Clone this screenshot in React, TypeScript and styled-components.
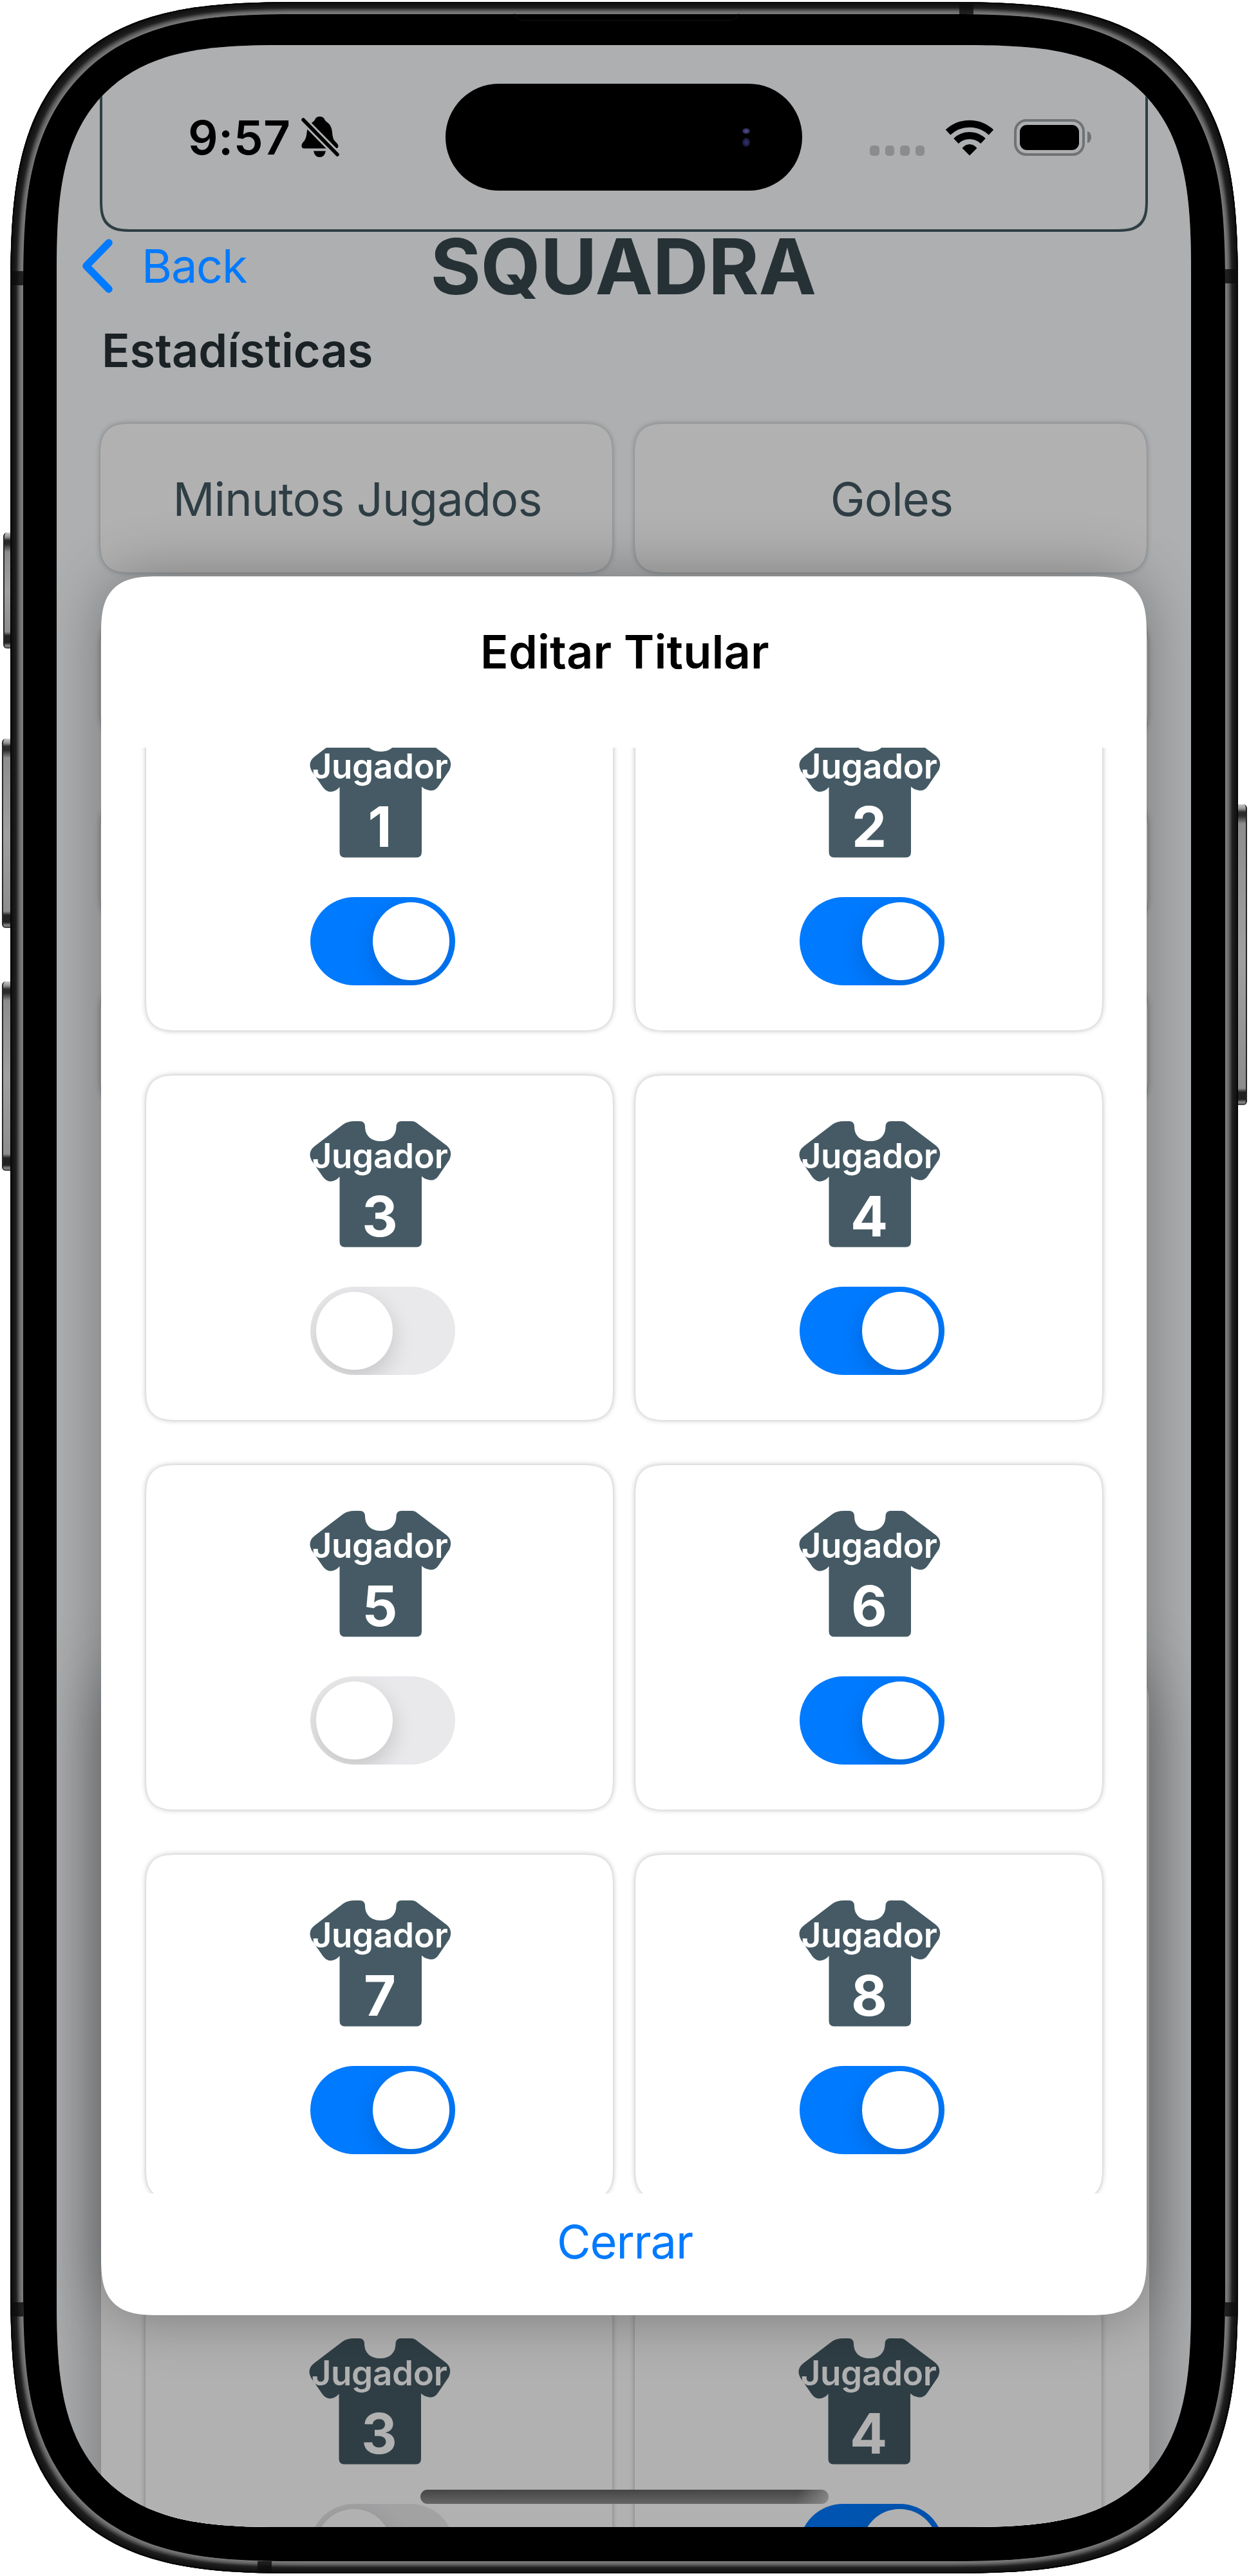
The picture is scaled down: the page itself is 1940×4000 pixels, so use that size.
import React from "react";
import styled, { createGlobalStyle, css } from "styled-components";

const GlobalStyle = createGlobalStyle`
  *, *::before, *::after { box-sizing: border-box; }
  html, body { margin: 0; padding: 0; background: #ffffff; }
  body { font-family: Inter, "Liberation Sans", sans-serif; font-kerning: normal; }
`;

const color = {
  blue: "#007aff",
  slate: "#455a64",
  slateDark: "#37474f",
  ink: "#263238",
  pageBg: "#f9fcff",
  dimmedBg: "#adafb1",
};

/* Continuous (squircle-like) corner, as iOS draws it. */
const continuous = (radius: number) => css`
  border-radius: ${radius}px;
  corner-shape: superellipse(1.56);
`;

/* ---------- Device ---------- */

const Stage = styled.main`
  position: relative;
  display: flex;
  width: 1940px;
  height: 4000px;
  padding: 3px 17px 4px 16px;
  overflow: hidden;
  background: #ffffff;
`;

const Frame = styled.div`
  position: relative;
  display: flex;
  width: 1907px;
  height: 3993px;
  padding: 19px 20px;
  ${continuous(455)}
  overflow: hidden;
  background: #7c7c7c;
  &::after {
    content: "";
    position: absolute;
    inset: 0;
    ${continuous(455)}
    box-shadow:
      inset 0 0 0 2px #050505,
      inset 0 0 0 6px #141414,
      inset 0 0 0 9px #1c1c1c,
      inset 0 0 0 10px #272727,
      inset 0 0 0 11px #333333,
      inset 0 0 0 12px #404040,
      inset 0 0 0 13px #4d4d4d,
      inset 0 0 0 14px #5a5a5a,
      inset 0 0 0 16px #686868,
      inset 0 0 0 18px #767676;
    pointer-events: none;
  }
`;

const Bezel = styled.div`
  position: relative;
  display: flex;
  flex: 1;
  padding: 48px 53px 53px 52px;
  ${continuous(432)}
  background: #000000;
`;

const SpeakerSlot = styled.div`
  position: absolute;
  top: -14px;
  left: 762px;
  width: 350px;
  height: 24px;
  border: 1px solid #121212;
  border-radius: 0 0 14px 14px;
`;

const AntennaBand = styled.span<{ $edge: "left" | "right" | "top" | "bottom"; $at: number }>`
  position: absolute;
  z-index: 1;
  background: rgba(12, 12, 12, 0.82);
  ${({ $edge, $at }) =>
    $edge === "left" || $edge === "right"
      ? css`
          ${$edge}: 0;
          top: ${$at}px;
          width: 20px;
          height: 22px;
        `
      : css`
          ${$edge}: 0;
          left: ${$at}px;
          width: 22px;
          height: 19px;
        `}
`;

const SideButton = styled.span<{ $side: "left" | "right"; $top: number; $height: number; $depth: number }>`
  position: absolute;
  top: ${({ $top }) => $top}px;
  width: ${({ $depth }) => $depth}px;
  height: ${({ $height }) => $height}px;
  ${({ $side, $depth }) =>
    $side === "left"
      ? css`
          left: ${16 - $depth}px;
          border-radius: 6px 0 0 6px;
          border-left: 2px solid #262626;
        `
      : css`
          left: 1923px;
          border-radius: 0 6px 6px 0;
          border-right: 2px solid #262626;
        `}
  background: linear-gradient(
    to bottom,
    #c9c9c9 0,
    #8f8f8f 7px,
    #2b2b2b 12px,
    #2b2b2b 18px,
    #8d8d8d 30px,
    #a0a0a0 50%,
    #8d8d8d calc(100% - 26px),
    #222222 calc(100% - 20px),
    #222222 calc(100% - 9px),
    #8a8a8a calc(100% - 4px),
    #333333 100%
  );
`;

const Screen = styled.div`
  position: relative;
  flex: 1;
  ${continuous(357)}
  overflow: hidden;
  background: ${color.pageBg};
`;

/* ---------- Page behind the dialog ---------- */

const Page = styled.div`
  display: flex;
  flex-direction: column;
  width: 1762px;
  padding: 0 67px 0 68px;
`;

const TopPanel = styled.section`
  flex: none;
  height: 290px;
  margin: 0 0 0 -1px;
  border: 4px solid ${color.slate};
  border-top: 0;
  border-radius: 0 0 50px 50px;
  corner-shape: superellipse(1.56);
`;

const PageTitle = styled.h1`
  margin: 0 3px 0 0;
  font-size: 120px;
  line-height: 108px;
  font-weight: 700;
  letter-spacing: -0.39px;
  text-align: center;
  color: ${color.slateDark};
`;

const SectionTitle = styled.h2`
  margin: 40px 0 78px 2px;
  font-size: 72px;
  line-height: 72px;
  font-weight: 600;
  color: ${color.ink};
`;

const cardSurface = css`
  background: #ffffff;
  ${continuous(50)}
  box-shadow: 0 0 9px rgba(0, 0, 0, 0.3);
`;

const StatsRow = styled.div`
  display: grid;
  grid-template-columns: 795px 795px;
  gap: 35px;
`;

const StatCard = styled.div`
  display: flex;
  align-items: center;
  justify-content: center;
  height: 231px;
  padding: 3px 0 0 3px;
  ${cardSurface}
  font-size: 72px;
  line-height: 72px;
  letter-spacing: -0.81px;
  color: ${color.slate};
`;

const PlainCard = styled.div`
  height: 192px;
  margin-top: 93px;
  ${cardSurface}
  ${StatsRow} + & { margin-top: 69px; }
`;

const SquadCard = styled.section`
  height: 1500px;
  margin-top: 881px;
  margin-left: 1px;
  margin-right: -2px;
  padding: 959px 69px 0;
  background: #ffffff;
  ${continuous(50)}
  box-shadow: 0 0 110px rgba(0, 0, 0, 0.36);
`;

const Dim = styled.div`
  position: absolute;
  inset: 0;
  background: rgba(0, 0, 0, 0.306);
`;

/* ---------- Player grid ---------- */

const PlayerGrid = styled.div`
  display: grid;
  grid-template-columns: 725px 725px;
  column-gap: 35px;
  row-gap: 70px;
`;

const PlayerCard = styled.article`
  display: flex;
  flex-direction: column;
  align-items: center;
  gap: 61px;
  height: 535px;
  padding-top: 71px;
  ${cardSurface}
`;

const Jersey = styled.div`
  display: grid;
  width: 219px;
  height: 196px;
  margin-left: 1px;
  & > * { grid-area: 1 / 1; }
`;

const JerseyLabels = styled.div`
  display: flex;
  flex-direction: column;
  align-items: center;
  width: 219px;
  padding-top: 28px;
  color: #ffffff;
`;

const JerseyName = styled.span`
  font-size: 53px;
  line-height: 53px;
  font-weight: 600;
  letter-spacing: -0.35px;
  white-space: nowrap;
`;

const JerseyNumber = styled.span`
  margin-top: 24px;
  font-size: 86px;
  line-height: 86px;
  font-weight: 700;
`;

const Toggle = styled.div<{ $on: boolean }>`
  display: flex;
  justify-content: ${({ $on }) => ($on ? "flex-end" : "flex-start")};
  width: 225px;
  height: 137px;
  margin-left: 10px;
  padding: 8px 9px;
  border-radius: 69px;
  overflow: hidden;
  background: ${({ $on }) => ($on ? color.blue : "#e9e9eb")};
`;

const Knob = styled.span`
  width: 119px;
  height: 121px;
  border-radius: 50%;
  background: #ffffff;
  box-shadow: 0 13px 34px rgba(0, 0, 0, 0.16);
`;

/* ---------- Dialog ---------- */

const Dialog = styled.section`
  position: absolute;
  top: 825px;
  left: 69px;
  display: flex;
  flex-direction: column;
  width: 1624px;
  height: 2700px;
  padding-top: 81px;
  ${continuous(92)}
  background: #ffffff;
  box-shadow: 0 0 95px rgba(0, 0, 0, 0.33);
`;

const DialogTitle = styled.h3`
  margin: 0 0 113px 3px;
  font-size: 72px;
  line-height: 72px;
  font-weight: 600;
  letter-spacing: 0.21px;
  text-align: center;
  color: #000000;
`;

const DialogScroll = styled.div`
  height: 2245px;
  padding: 0 70px;
  overflow: hidden;
`;

const ScrolledContent = styled.div`
  margin-top: -96px;
`;

const CloseButton = styled.button`
  align-self: center;
  margin: 39px 0 0 3px;
  padding: 0;
  border: 0;
  background: none;
  font: 400 72px/72px Inter, "Liberation Sans", sans-serif;
  letter-spacing: -1.07px;
  color: ${color.blue};
`;

/* ---------- System chrome ---------- */

const Chrome = styled.div`
  position: absolute;
  inset: 0;
  display: flex;
  flex-direction: column;
  padding: 40px 0 36px;
`;

const StatusBar = styled.header`
  display: grid;
  grid-template-columns: 1fr 554px 1fr;
  align-items: center;
  height: 206px;
`;

const StatusLeft = styled.div`
  display: flex;
  align-items: center;
  gap: 17px;
  padding-left: 204px;
`;

const Clock = styled.span`
  font-size: 73px;
  line-height: 73px;
  font-weight: 600;
  letter-spacing: 0.37px;
  color: #000000;
`;

const Island = styled.div`
  display: flex;
  flex-direction: column;
  align-items: flex-end;
  justify-content: center;
  gap: 6px;
  height: 166px;
  padding-right: 81px;
  border-radius: 83px;
  background: #000000;
`;

const LensGlint = styled.i<{ $tone: string; $h: number }>`
  width: 12px;
  height: ${({ $h }) => $h}px;
  border-radius: 50%;
  background: radial-gradient(${({ $tone }) => $tone} 20%, #06060f 100%);
`;

const StatusRight = styled.div`
  display: flex;
  align-items: flex-end;
  height: 57px;
  padding-left: 105px;
`;

const SignalDots = styled.div`
  display: flex;
  gap: 9px;
  margin-right: 33px;
`;

const SignalDot = styled.i`
  width: 14.5px;
  height: 15.5px;
  border-radius: 5px;
  background: #8b8c8e;
`;

const Battery = styled.div`
  display: flex;
  align-items: center;
  gap: 4px;
  margin-left: 32px;
`;

const BatteryShell = styled.div`
  width: 110px;
  height: 57px;
  padding: 5px;
  border: 4px solid #717274;
  border-radius: 19px;
`;

const BatteryLevel = styled.div`
  height: 100%;
  border-radius: 11px;
  background: #000000;
`;

const BatteryCap = styled.div`
  width: 6px;
  height: 18px;
  border-radius: 0 6px 6px 0 / 0 9px 9px 0;
  background: #717274;
`;

const NavBar = styled.nav`
  display: flex;
  align-items: center;
  gap: 45px;
  height: 84px;
  margin-top: 55px;
  padding-left: 39px;
`;

const BackLabel = styled.span`
  font-size: 72px;
  line-height: 72px;
  letter-spacing: -1.22px;
  color: ${color.blue};
`;

const HomeIndicator = styled.div`
  align-self: center;
  width: 634px;
  height: 22px;
  margin-top: auto;
  margin-left: 2px;
  border-radius: 11px;
  background:
    linear-gradient(100deg, transparent 92%, rgba(150, 150, 150, 0.75) 100%),
    linear-gradient(to bottom, #454545, #666666);
`;

/* ---------- Drawings ---------- */

const JerseyShape = () => (
  <svg width="220" height="196" viewBox="0 0 220 196" aria-hidden="true">
    <path
      fill={color.slate}
      d="M70 0H78Q85.5 0 86 8C86 23 96 31 110.500 31C125 31 134.500 23 134.500 8Q135 0 142.500 0H159Q163.500 0 168 4L213 38Q223 47 217 60L200 85C196 91 190 92.500 185 91Q179 90 174 85.500V187Q174 195.500 166 195.500H54.500Q46.500 195.500 46.500 187V86Q41 93 33 93.500Q26 93.500 21 87L3 61Q-4 48 8 38.500L52 5Q59 0 70 0Z"
    />
  </svg>
);

const BellSlash = () => (
  <svg width="60" height="64" viewBox="0 0 60 64" aria-hidden="true">
    <path
      fill="#000"
      d="M17 9Q20 7.500 21 5Q23 0 28.600 0Q34.500 0 36.500 5Q37.500 7.500 41 9.500Q47 14 48 24Q48.500 34 52 38Q57.500 43 57.500 46Q57 49.500 53 49.500H4.500Q0 49.500 0.500 45Q0.500 41.500 4.500 38Q8 33 8.500 25Q9.500 14 17 9ZM19 53.500H38Q36 63 28.500 63Q21 63 19 53.500Z"
    />
    <path d="M0 2L60 63" stroke={color.dimmedBg} strokeWidth="11.500" />
    <path d="M3 5L56 59" stroke="#000" strokeWidth="5.500" strokeLinecap="round" />
  </svg>
);

const Wifi = () => (
  <svg width="74" height="56" viewBox="0 0 74 56" aria-hidden="true">
    <g fill="none" stroke="#000" strokeWidth="11">
      <path d="M3.500 19.500A49 49 0 0 1 70.500 19.500" />
      <path d="M16 33A30.500 30.500 0 0 1 58 33" />
    </g>
    <path d="M37 55.500L25.500 44Q30.500 38 37 38Q43.500 38 48.500 44Z" />
  </svg>
);

const Chevron = () => (
  <svg width="48" height="84" viewBox="0 0 48 84" aria-hidden="true">
    <path
      d="M42 6L7 42L42 78"
      fill="none"
      stroke={color.blue}
      strokeWidth="11.500"
      strokeLinecap="round"
      strokeLinejoin="round"
    />
  </svg>
);

/* ---------- Composition ---------- */

type PlayerData = { number: number; starter: boolean };

const Player = ({ number, starter }: PlayerData) => (
  <PlayerCard>
    <Jersey>
      <JerseyShape />
      <JerseyLabels>
        <JerseyName>Jugador</JerseyName>
        <JerseyNumber>{number}</JerseyNumber>
      </JerseyLabels>
    </Jersey>
    <Toggle $on={starter} role="switch" aria-checked={starter}>
      <Knob />
    </Toggle>
  </PlayerCard>
);

const players: PlayerData[] = [
  { number: 1, starter: true },
  { number: 2, starter: true },
  { number: 3, starter: false },
  { number: 4, starter: true },
  { number: 5, starter: false },
  { number: 6, starter: true },
  { number: 7, starter: true },
  { number: 8, starter: true },
];

export default function App() {
  return (
    <>
      <GlobalStyle />
      <Stage>
        <SideButton $side="left" $top={827} $height={180} $depth={11} />
        <SideButton $side="left" $top={1147} $height={294} $depth={13} />
        <SideButton $side="left" $top={1524} $height={294} $depth={13} />
        <SideButton $side="right" $top={1249} $height={467} $depth={14} />
        <Frame>
          <Bezel>
            <SpeakerSlot />
            <Screen>
              <Page>
                <TopPanel />
                <PageTitle>SQUADRA</PageTitle>
                <SectionTitle>Estadísticas</SectionTitle>
                <StatsRow>
                  <StatCard>Minutos Jugados</StatCard>
                  <StatCard>Goles</StatCard>
                </StatsRow>
                <PlainCard />
                <PlainCard />
                <PlainCard />
                <SquadCard>
                  <PlayerGrid>
                    {players.slice(2, 4).map((p) => (
                      <Player key={p.number} {...p} />
                    ))}
                  </PlayerGrid>
                </SquadCard>
              </Page>
              <Dim />
              <Dialog>
                <DialogTitle>Editar Titular</DialogTitle>
                <DialogScroll>
                  <ScrolledContent>
                    <PlayerGrid>
                      {players.map((p) => (
                        <Player key={p.number} {...p} />
                      ))}
                    </PlayerGrid>
                  </ScrolledContent>
                </DialogScroll>
                <CloseButton>Cerrar</CloseButton>
              </Dialog>
              <Chrome>
                <StatusBar>
                  <StatusLeft>
                    <Clock>9:57</Clock>
                    <BellSlash />
                  </StatusLeft>
                  <Island>
                    <LensGlint $tone="#4a4a86" $h={9} />
                    <LensGlint $tone="#2c2f66" $h={14} />
                  </Island>
                  <StatusRight>
                    <SignalDots>
                      <SignalDot />
                      <SignalDot />
                      <SignalDot />
                      <SignalDot />
                    </SignalDots>
                    <Wifi />
                    <Battery>
                      <BatteryShell>
                        <BatteryLevel />
                      </BatteryShell>
                      <BatteryCap />
                    </Battery>
                  </StatusRight>
                </StatusBar>
                <NavBar>
                  <Chevron />
                  <BackLabel>Back</BackLabel>
                </NavBar>
                <HomeIndicator />
              </Chrome>
            </Screen>
          </Bezel>
          <AntennaBand $edge="left" $at={418} />
          <AntennaBand $edge="left" $at={3572} />
          <AntennaBand $edge="right" $at={415} />
          <AntennaBand $edge="right" $at={3572} />
          <AntennaBand $edge="top" $at={1474} />
          <AntennaBand $edge="bottom" $at={384} />
        </Frame>
      </Stage>
    </>
  );
}
